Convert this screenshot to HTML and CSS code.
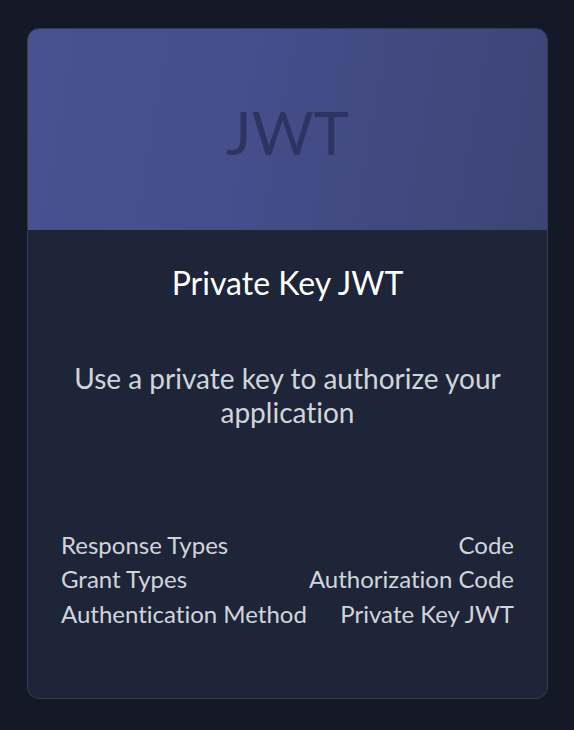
FILE: index.html
```html
<!DOCTYPE html>
<html lang="en">
<head>
<meta charset="utf-8">
<title>Private Key JWT</title>
<link rel="stylesheet" href="styles.css">
</head>
<body>
<div class="page">
  <div class="card">
    <div class="card-hero"><span class="hero-text">JWT</span></div>
    <div class="card-body">
      <h2 class="card-title">Private Key JWT</h2>
      <p class="card-desc">Use a private key to authorize your application</p>
      <dl class="meta">
        <div class="meta-row"><dt>Response Types</dt><dd>Code</dd></div>
        <div class="meta-row"><dt>Grant Types</dt><dd>Authorization Code</dd></div>
        <div class="meta-row"><dt>Authentication Method</dt><dd>Private Key JWT</dd></div>
      </dl>
    </div>
  </div>
</div>
</body>
</html>
```

FILE: styles.css
```css
html, body {
  margin: 0;
  padding: 0;
  background: #131926;
  font-family: Lato, "Noto Sans", sans-serif;
  font-variant-ligatures: no-common-ligatures;
}
.page {
  padding: 28px 26px 31px 27px;
}
.card {
  height: 671px;
  box-sizing: border-box;
  border: 1px solid #343c52;
  border-radius: 12px;
  background: #1e2539;
  overflow: hidden;
  display: flex;
  flex-direction: column;
}
.card-hero {
  height: 201px;
  flex: none;
  background: linear-gradient(100deg, #4a5190 0%, #454d8a 45%, #3d4475 100%);
  display: flex;
  align-items: center;
  justify-content: center;
}
.hero-text {
  font-size: 60px;
  color: #2e3461;
  line-height: 1;
  margin-top: 4px;
}
.card-body {
  padding: 0 33px;
  display: flex;
  flex-direction: column;
}
.card-title {
  margin: 34px 0 0;
  text-align: center;
  font-size: 32px;
  font-weight: 400;
  line-height: 1.2;
  color: #ffffff;
}
.card-desc {
  margin: 60px 0 0;
  text-align: center;
  font-size: 28px;
  line-height: 1.2;
  color: #d1d5db;
}
.meta {
  margin: 98px 0 0;
}
.meta-row {
  display: flex;
  justify-content: space-between;
  font-size: 24px;
  line-height: 34.5px;
  color: #d1d5db;
}
.meta-row dt, .meta-row dd {
  margin: 0;
}
```
